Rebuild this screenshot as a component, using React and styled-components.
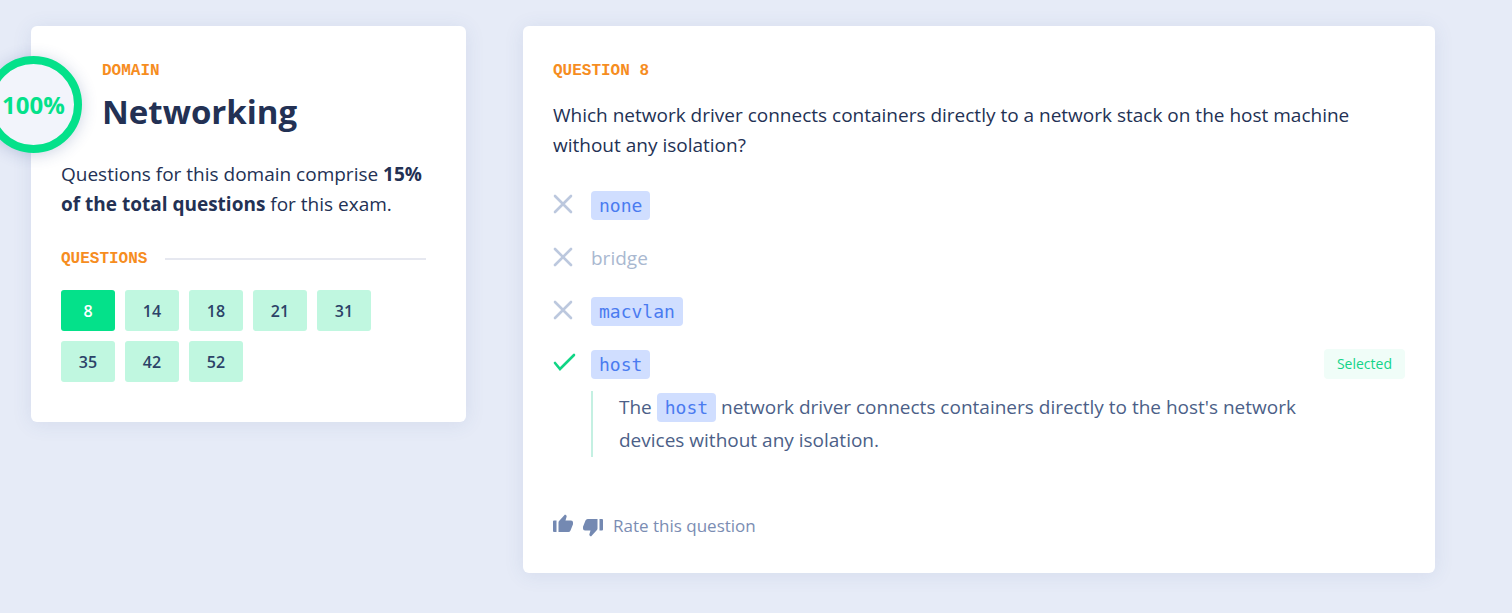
import React from "react";
import styled, { createGlobalStyle } from "styled-components";

const sans = `"Open Sans", "Noto Sans", sans-serif`;
const mono = `"DejaVu Sans Mono", monospace`;

const GlobalStyle = createGlobalStyle`
  * { box-sizing: border-box; }
  body {
    margin: 0;
    background: #e6ebf7;
    color: #233154;
    font-family: ${sans};
    font-size: 19px;
    line-height: 30px;
    overflow-x: hidden;
  }
  h1, h2, p, ul, ol { margin: 0; padding: 0; }
  ul, ol { list-style: none; }
`;

const Page = styled.main`
  display: grid;
  grid-template-columns: minmax(0, 435fr) minmax(0, 912fr);
  align-items: start;
  gap: 57px;
  padding: 26px 77px 40px 31px;
`;

const Card = styled.section`
  position: relative;
  padding: 30px 30px 32px;
  background: #fff;
  border-radius: 6px;
  box-shadow: 0 2px 20px rgba(60, 90, 150, 0.1);
`;

const DomainCard = styled(Card)`
  padding-bottom: 40px;
`;

const Label = styled.h2`
  color: #f68d1f;
  font: bold 16px/30px "Liberation Mono", monospace;
  text-transform: uppercase;
`;

const Score = styled.div`
  position: absolute;
  top: 30px;
  left: -46px;
  display: flex;
  align-items: center;
  justify-content: center;
  width: 97px;
  height: 97px;
  border: 8px solid #04e18a;
  border-radius: 50%;
  background: #f2f4fb;
  box-shadow: 0 2px 16px rgba(40, 70, 140, 0.24);
  color: #04e18a;
  font-size: 24px;
  font-weight: 700;
`;

const DomainHeader = styled.header`
  padding-left: 41px;
`;

const DomainName = styled.h1`
  padding-top: 4px;
  font-size: 33px;
  font-weight: 700;
  line-height: 44px;
`;

const Summary = styled.p`
  margin-top: 25px;
`;

const Divider = styled.div`
  display: flex;
  align-items: center;
  gap: 18px;
  margin: 25px 10px 16px 0;

  &::after {
    content: "";
    flex: 1;
    height: 2px;
    background: #e6e8f0;
  }
`;

const NumberList = styled.ol`
  display: flex;
  flex-wrap: wrap;
  gap: 10px;
  padding-right: 60px;
`;

const NumberButton = styled.button`
  display: block;
  width: 54px;
  height: 41px;
  padding: 0;
  border: 0;
  border-radius: 3px;
  background: ${(p) => (p.$active ? "#04e18a" : "#c0f7e0")};
  color: ${(p) => (p.$active ? "#fff" : "#2c4368")};
  font: 600 16px/42px ${sans};
`;

const Prompt = styled.p`
  margin-top: 14px;
`;

const Answers = styled.ul`
  display: grid;
  gap: 23px;
  margin-top: 30px;
`;

const Answer = styled.li`
  display: grid;
  grid-template-columns: 38px minmax(0, 1fr) auto;
  align-items: center;
  min-height: 30px;
  color: #a9b8d0;
`;

const Code = styled.code`
  display: inline-block;
  padding: 0 8px;
  border-radius: 4px;
  background: #d0deff;
  color: #4a7bf0;
  font: 18px/29px ${mono};
`;

const Badge = styled.span`
  padding: 0 13px;
  border-radius: 4px;
  background: #f0fdf8;
  color: #12d488;
  font-size: 14px;
`;

const Explanation = styled.p`
  grid-column: 2;
  margin-top: 12px;
  padding-left: 26px;
  border-left: 2px solid #c4f0e2;
  color: #4c5f88;
  line-height: 33px;
`;

const Mark = styled.svg`
  display: block;
  width: 24px;
  height: 24px;
  fill: none;
  stroke: ${(p) => (p.$correct ? "#10d585" : "#bcc8de")};
  stroke-width: 2.6;
  stroke-linecap: round;
`;

const Rating = styled.footer`
  display: flex;
  align-items: center;
  gap: 10px;
  margin-top: 54px;
  color: #7b8db3;
  font-size: 17px;
`;

const RateButton = styled.button`
  display: block;
  padding: 0;
  border: 0;
  background: none;
  color: #7489b2;
`;

const Thumb = styled.svg`
  display: block;
  width: 20px;
  height: 24px;
  fill: currentColor;
`;

const questions = [8, 14, 18, 21, 31, 35, 42, 52];

const Cross = () => (
  <Mark viewBox="0 0 24 24" role="img" aria-label="Incorrect">
    <path d="M2 3l16 16M18 3L2 19" />
  </Mark>
);

const Check = () => (
  <Mark $correct viewBox="0 0 24 24" role="img" aria-label="Correct">
    <path d="M2 11l5 6L21 3" />
  </Mark>
);

export default function App() {
  return (
    <>
      <GlobalStyle />
      <Page>
        <DomainCard>
          <Score>100%</Score>
          <DomainHeader>
            <Label>Domain</Label>
            <DomainName>Networking</DomainName>
          </DomainHeader>
          <Summary>
            Questions for this domain comprise <strong>15% of the total questions</strong> for this exam.
          </Summary>
          <Divider>
            <Label>Questions</Label>
          </Divider>
          <NumberList>
            {questions.map((n) => (
              <li key={n}>
                <NumberButton type="button" $active={n === 8}>{n}</NumberButton>
              </li>
            ))}
          </NumberList>
        </DomainCard>
        <Card>
          <Label>Question 8</Label>
          <Prompt>
            Which network driver connects containers directly to a network stack on the host machine without any isolation?
          </Prompt>
          <Answers>
            <Answer><Cross /><span><Code>none</Code></span></Answer>
            <Answer><Cross /><span>bridge</span></Answer>
            <Answer><Cross /><span><Code>macvlan</Code></span></Answer>
            <Answer>
              <Check />
              <span><Code>host</Code></span>
              <Badge>Selected</Badge>
              <Explanation>
                The <Code>host</Code> network driver connects containers directly to the host's network devices without any isolation.
              </Explanation>
            </Answer>
          </Answers>
          <Rating>
            <RateButton type="button" aria-label="Good question">
              <Thumb viewBox="0 0 20 24">
                <path d="M0 7.500q0-1 1-1h2.500v11.500h-2.500q-1 0-1-1zM5.500 18V8.500q0-1 .8-1.700L12 .5l1.200.8q.7.600.4 1.400L12.500 6.500H18q2 0 2 2v1.700l-2.500 6.300q-.6 1.500-2.200 1.500z" />
              </Thumb>
            </RateButton>
            <RateButton type="button" aria-label="Bad question">
              <Thumb viewBox="0 0 20 24">
                <path d="M20 15.500q0 1-1 1h-2.500V5h2.500q1 0 1 1zM14.500 5v9.500q0 1-.8 1.700L8 22.500l-1.200-.8q-.7-.600-.4-1.400L7.500 16.500H2q-2 0-2-2v-1.700L2.500 6.500Q3.100 5 4.700 5z" />
              </Thumb>
            </RateButton>
            <span>Rate this question</span>
          </Rating>
        </Card>
      </Page>
    </>
  );
}
